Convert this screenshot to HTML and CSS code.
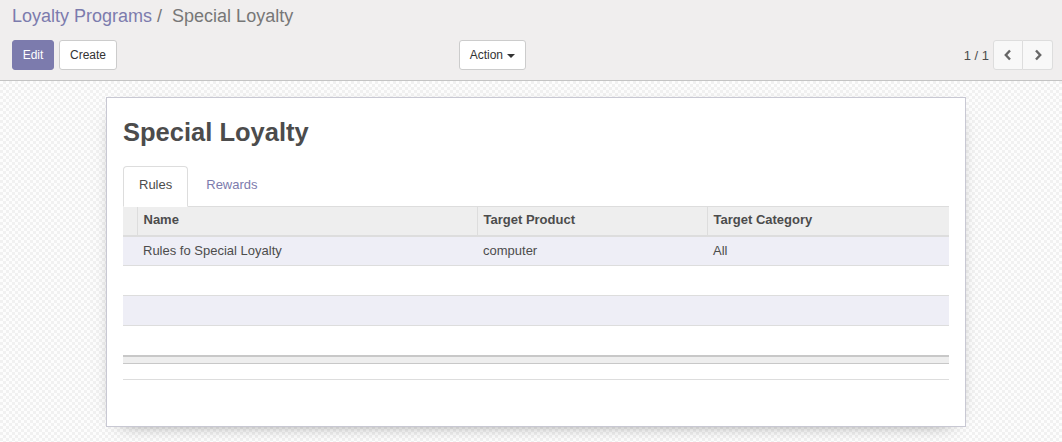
FILE: index.html
```html
<!DOCTYPE html>
<html>
<head>
<meta charset="utf-8">
<link rel="stylesheet" href="styles.css">
</head>
<body>
<div class="cp">
  <div class="crumbs"><a class="crumb-link">Loyalty Programs</a><span class="sep">/</span><span class="crumb-cur">Special Loyalty</span></div>
  <div class="cp-bottom">
    <div class="cp-left">
      <div class="btns">
        <button class="btn btn-primary">Edit</button>
        <button class="btn">Create</button>
      </div>
      <button class="btn btn-action">Action <span class="caret"></span></button>
    </div>
    <div class="cp-right">
      <span class="pager-val">1 / 1</span>
      <div class="pager-btns">
        <button class="pbtn"><svg width="10" height="12" viewBox="0 0 10 12"><polyline points="7,1.5 2.8,6 7,10.5" fill="none" stroke="#666" stroke-width="2.4"/></svg></button>
        <button class="pbtn"><svg width="10" height="12" viewBox="0 0 10 12"><polyline points="3,1.5 7.2,6 3,10.5" fill="none" stroke="#666" stroke-width="2.4"/></svg></button>
      </div>
    </div>
  </div>
</div>
<div class="content">
  <div class="sheet">
    <h1 class="title">Special Loyalty</h1>
    <div class="tabs">
      <div class="tab active">Rules</div>
      <div class="tab">Rewards</div>
    </div>
    <table class="grid">
      <thead>
        <tr><th class="sel"></th><th class="c-name">Name</th><th class="c-prod">Target Product</th><th>Target Category</th></tr>
      </thead>
      <tbody>
        <tr class="odd"><td></td><td>Rules fo Special Loyalty</td><td>computer</td><td>All</td></tr>
        <tr><td></td><td></td><td></td><td></td></tr>
        <tr class="odd"><td></td><td></td><td></td><td></td></tr>
        <tr><td></td><td></td><td></td><td></td></tr>
      </tbody>
      <tfoot>
        <tr><td></td><td></td><td></td><td></td></tr>
      </tfoot>
    </table>
    <div class="rule"></div>
  </div>
</div>
</body>
</html>
```

FILE: styles.css
```css
* { box-sizing: border-box; }
html, body { margin: 0; padding: 0; }
body {
  font-family: "Liberation Sans", Arial, sans-serif;
  font-size: 13px;
  color: #4c4c4c;
  background: #fff;
  width: 1062px;
  height: 442px;
  overflow: hidden;
}
.cp {
  background: #f0eeee;
  border-bottom: 1px solid #c4c4c4;
  padding: 3px 9px 0 12px;
  height: 81px;
}
.crumbs {
  font-size: 18px;
  line-height: 26px;
  height: 26px;
}
.crumb-link { color: #7c7bad; }
.sep { color: #777; margin: 0 10px 0 5px; }
.crumb-cur { color: #777; }
.cp-bottom {
  margin-top: 11px;
  display: flex;
  align-items: center;
  justify-content: space-between;
}
.cp-left {
  width: 519px;
  display: flex;
  justify-content: space-between;
}
.btns { display: flex; gap: 5px; }
.btn {
  font-family: "Liberation Sans", Arial, sans-serif;
  font-size: 12px;
  line-height: 18px;
  padding: 5px 10px;
  border: 1px solid #ccc;
  border-radius: 3px;
  background: #fff;
  color: #333;
  height: 30px;
}
.btn-primary {
  background: #7c7bad;
  border-color: #7c7bad;
  color: #fff;
  width: 42px;
  padding: 5px 0;
  text-align: center;
}
.btn-action { margin-right: 5px; width: 67px; padding: 5px 0; text-align: center; }
.caret {
  display: inline-block;
  width: 0; height: 0;
  border-left: 4px solid transparent;
  border-right: 4px solid transparent;
  border-top: 4px solid #333;
  vertical-align: middle;
  margin-left: 1px;
}
.cp-right { display: flex; align-items: center; }
.pager-val { font-size: 13px; color: #4c4c4c; margin-right: 4px; }
.pager-btns { display: flex; }
.pbtn {
  width: 30px; height: 30px;
  background: #f8f8f8;
  border: 1px solid #ddd;
  padding: 0;
  display: flex; align-items: center; justify-content: center;
}
.pbtn:first-child { border-radius: 3px 0 0 3px; }
.pbtn:last-child { border-radius: 0 3px 3px 0; border-left: none; }
.content {
  height: 361px;
  padding: 16px 0 0 10px;
  background-color: #fdfdfd;
  background-image: conic-gradient(#f1f1f1 25%, transparent 0 50%, #f1f1f1 0 75%, transparent 0);
  background-size: 6px 6px;
}
.sheet {
  width: 860px;
  height: 330px;
  margin: 0 auto;
  background: #fff;
  border: 1px solid #c8c8d3;
  box-shadow: 0 5px 20px -15px #000;
  padding: 20px 16px 0 16px;
}
.title {
  margin: 0;
  font-size: 25.5px;
  line-height: 28px;
  font-weight: bold;
  color: #4c4c4c;
}
.tabs {
  margin-top: 20px;
  display: flex;
  border-bottom: 1px solid #ddd;
  height: 41px;
}
.tab {
  padding: 8px 15px 12px;
  line-height: 20px;
  color: #7c7bad;
  border: 1px solid transparent;
  border-radius: 4px 4px 0 0;
  margin-right: 2px;
  height: 41px;
}
.tab.active {
  color: #4c4c4c;
  border-color: #ddd;
  border-bottom-color: #fff;
  background: #fff;
}
.grid {
  width: 826px;
  border-collapse: collapse;
  margin-top: -1px;
}
.grid th {
  background: #eee;
  text-align: left;
  font-weight: bold;
  height: 29px;
  padding: 0 5px 2px 6px;
  border-bottom: 2px solid #ddd;
  border-left: 1px solid #ddd;
  border-top: 1px solid #ddd;
}
.grid th.sel { width: 14px; border-left: none; padding: 0; }
.grid th.c-name { width: 340px; }
.grid th.c-prod { width: 230px; }
.grid td {
  height: 30px;
  padding: 0 5px 1px 6px;
  border-bottom: 1px solid #ddd;
}
.grid tbody tr.odd td { background: #eeeef6; }
.grid tfoot td {
  height: 8px;
  padding: 0;
  background: #eee;
  border-top: 2px solid #c8c8c8;
  border-bottom: 1px solid #c8c8c8;
}
.rule {
  margin-top: 15px;
  border-top: 1px solid #ddd;
}
```
